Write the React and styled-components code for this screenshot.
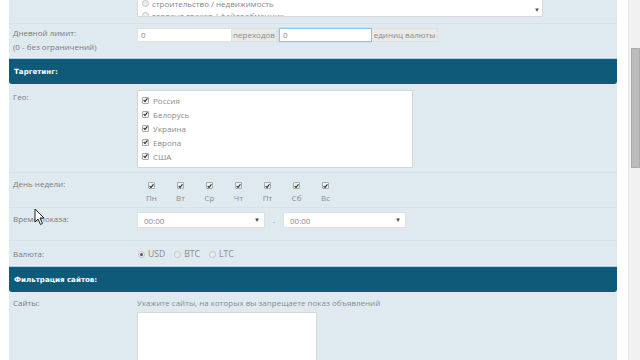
import React from "react";
import styled, { createGlobalStyle } from "styled-components";

const Global = createGlobalStyle`
  html, body { margin: 0; padding: 0; background: #fff; }
  body { width: 640px; height: 360px; overflow: hidden; font-family: "Open Sans", "Liberation Sans", sans-serif; }
  * { box-sizing: border-box; }
`;

const Page = styled.div`
  display: flex;
  width: 640px;
  height: 360px;
  overflow: hidden;
  position: relative;
`;

const Main = styled.div`
  flex: 1;
  padding: 0 11px 0 9px;
`;

const Panel = styled.div`
  background: #dfeaf0;
  margin-top: -15px;
  min-height: 400px;
`;

const Scrollbar = styled.div`
  width: 12px;
  background: #f1f1f1;
  padding-top: 48px;
  padding-left: 2px;
  border-left: 1px solid #e6e6e6;
`;

const Thumb = styled.div`
  width: 9px;
  height: 120px;
  background: #bcbcbc;
  border: 1px solid #ababab;
`;

const Row = styled.div`
  display: grid;
  grid-template-columns: 128px 1fr;
  padding: ${(p) => p.$pad || "0"};
  border-bottom: ${(p) => (p.$noLine ? "none" : "1px solid #d3e1e9")};
`;

const Label = styled.div`
  padding-left: 4px;
  padding-top: ${(p) => p.$top || 0}px;
  color: #7b7b7b;
  font-size: 8px;
  line-height: 14px;
`;

const Content = styled.div`
  padding-top: ${(p) => p.$top || 0}px;
`;

const ListBox = styled.div`
  display: flex;
  width: 406px;
  height: 32px;
  background: #fff;
  border: 1px solid #d9d9d9;
  border-top: none;
  overflow: hidden;
`;

const ListItems = styled.div`
  flex: 1;
  padding: 12px 0 0 4px;
`;

const ListItem = styled.div`
  display: flex;
  align-items: center;
  gap: 3px;
  height: 12px;
  color: #8a8a8a;
  font-size: 8px;
  white-space: nowrap;
`;

const ListArrow = styled.div`
  width: 10px;
  display: flex;
  align-items: flex-end;
  justify-content: center;
  padding-bottom: 3px;
  color: #555;
  font-size: 6px;
  line-height: 6px;
`;

const InputGroup = styled.div`
  display: flex;
  align-items: stretch;
  height: 14px;
`;

const TextInput = styled.div`
  width: ${(p) => p.$w}px;
  background: #fff;
  border: 1px solid ${(p) => (p.$focus ? "#8fc3e6" : "#e2e2e2")};
  box-shadow: ${(p) => (p.$focus ? "0 0 2px #a8d3f0" : "none")};
  color: #888;
  font-size: 8px;
  line-height: 12px;
  padding-left: 3px;
  margin-left: ${(p) => p.$ml || 0}px;
`;

const Addon = styled.div`
  width: ${(p) => p.$w}px;
  background: #e9e9e9;
  border: 1px solid #e0e0e0;
  border-left: none;
  color: #8a8a8a;
  font-size: 8px;
  line-height: 12px;
  text-align: center;
`;

const Header = styled.div`
  background: #0f5a78;
  border-top: 1px solid #a6d6ea;
  border-radius: 0 0 3px 3px;
  height: 26px;
  padding-left: 5px;
  display: flex;
  align-items: center;
  color: #fff;
  font-family: "DejaVu Sans", Verdana, sans-serif;
  font-weight: bold;
  font-size: 7.1px;
`;

const GeoBox = styled.div`
  width: 276px;
  height: 78px;
  background: #fff;
  border: 1px solid #d4d4d4;
  padding: 2px 0 0 4px;
`;

const GeoItem = styled.div`
  display: flex;
  align-items: center;
  gap: 4px;
  height: 14px;
  color: #8a8a8a;
  font-size: 8px;
`;

const CheckBox = styled.span`
  display: inline-flex;
  align-items: center;
  justify-content: center;
  width: 7px;
  height: 7px;
  border: 1px solid #a9a9a9;
  border-radius: 1px;
  background: #f2f2f2;
  flex: none;
`;

const Radio = styled.span`
  display: inline-flex;
  align-items: center;
  justify-content: center;
  width: 7px;
  height: 7px;
  border-radius: 50%;
  border: 1px solid #c4c4c4;
  background: #ececec;
  flex: none;
  &::after {
    content: "";
    display: ${(p) => (p.$on ? "block" : "none")};
    width: 3px;
    height: 3px;
    border-radius: 50%;
    background: #555;
  }
`;

const Days = styled.div`
  display: flex;
`;

const Day = styled.div`
  width: 29px;
  display: flex;
  flex-direction: column;
  align-items: center;
`;

const DayName = styled.div`
  margin-top: 3px;
  color: #8a8a8a;
  font-size: 8px;
  line-height: 12px;
`;

const Selects = styled.div`
  display: flex;
  align-items: center;
`;

const Select = styled.div`
  width: ${(p) => p.$w}px;
  height: 16px;
  background: #fff;
  border: 1px solid #e1e1e1;
  display: flex;
  align-items: center;
  justify-content: space-between;
  padding: 0 4px 0 6px;
  color: #888;
  font-size: 8px;
`;

const Caret = styled.span`
  color: #444;
  font-size: 6px;
`;

const Dash = styled.span`
  width: 18px;
  text-align: center;
  color: #999;
  font-size: 8px;
`;

const Radios = styled.div`
  display: flex;
  align-items: center;
  gap: 3px;
  color: #8a8a8a;
  font-size: 8.6px;
  line-height: 12px;
  padding-left: 1px;
`;

const RadioLabel = styled.span`
  margin-right: 6px;
`;

const Hint = styled.div`
  color: #8a8a8a;
  font-size: 8px;
  line-height: 14px;
`;

const TextArea = styled.div`
  width: 180px;
  height: 80px;
  margin-top: 2px;
  background: #fff;
  border: 1px solid #d8d8d8;
`;

const Cursor = styled.svg`
  position: absolute;
  left: 34px;
  top: 208px;
`;

const Tick = () => (
  <svg width="6" height="6" viewBox="0 0 6 6">
    <path d="M0.8 3.2 L2.4 4.8 L5.3 1" stroke="#222" strokeWidth="1.3" fill="none" />
  </svg>
);

const Check = () => (
  <CheckBox>
    <Tick />
  </CheckBox>
);

const geo = ["Россия", "Белорусь", "Украина", "Европа", "США"];
const days = ["Пн", "Вт", "Ср", "Чт", "Пт", "Сб", "Вс"];

export default function App() {
  return (
    <>
      <Global />
      <Page>
        <Main>
          <Panel>
            <Row $pad="0 0 6px 0">
              <Label />
              <Content>
                <ListBox>
                  <ListItems>
                    <ListItem><Radio />строительство / недвижимость</ListItem>
                    <ListItem><Radio />торрент-трекер / файлообменник</ListItem>
                  </ListItems>
                  <ListArrow>▼</ListArrow>
                </ListBox>
              </Content>
            </Row>
            <Row $pad="2px 0 4px 0" $noLine>
              <Label>
                Дневной лимит:
                <br />
                (0 - без ограничений)
              </Label>
              <Content $top={2}>
                <InputGroup>
                  <TextInput $w={95}>0</TextInput>
                  <Addon $w={45}>переходов</Addon>
                  <TextInput $w={93} $ml={2} $focus>0</TextInput>
                  <Addon $w={66}>единиц валюты</Addon>
                </InputGroup>
              </Content>
            </Row>
            <Header>Таргетинг:</Header>
            <Row $pad="6px 0 4px 0">
              <Label $top={-1}>Гео:</Label>
              <Content>
                <GeoBox>
                  {geo.map((g) => (
                    <GeoItem key={g}>
                      <Check />
                      {g}
                    </GeoItem>
                  ))}
                </GeoBox>
              </Content>
            </Row>
            <Row $pad="0 0 3px 0">
              <Label $top={4}>День недели:</Label>
              <Content $top={9}>
                <Days>
                  {days.map((d) => (
                    <Day key={d}>
                      <Check />
                      <DayName>{d}</DayName>
                    </Day>
                  ))}
                </Days>
              </Content>
            </Row>
            <Row $pad="4px 0 12px 0">
              <Label $top={-1}>Время показа:</Label>
              <Content>
                <Selects>
                  <Select $w={128}>
                    00:00<Caret>▼</Caret>
                  </Select>
                  <Dash>-</Dash>
                  <Select $w={123}>
                    00:00<Caret>▼</Caret>
                  </Select>
                </Selects>
              </Content>
            </Row>
            <Row $pad="6px 0 5px 0" $noLine>
              <Label>Валюта:</Label>
              <Content $top={1}>
                <Radios>
                  <Radio $on />
                  <RadioLabel>USD</RadioLabel>
                  <Radio />
                  <RadioLabel>BTC</RadioLabel>
                  <Radio />
                  <RadioLabel>LTC</RadioLabel>
                </Radios>
              </Content>
            </Row>
            <Header>Фильтрация сайтов:</Header>
            <Row $pad="4px 0 0 0" $noLine>
              <Label>Сайты:</Label>
              <Content>
                <Hint>Укажите сайты, на которых вы запрещаете показ объявлений</Hint>
                <TextArea />
              </Content>
            </Row>
          </Panel>
        </Main>
        <Scrollbar>
          <Thumb />
        </Scrollbar>
        <Cursor width="12" height="18" viewBox="0 0 12 18">
          <path d="M1 1 L1 14 L4 11 L6.5 16.5 L8.5 15.5 L6 10 L10 10 Z" fill="#fff" stroke="#222" strokeWidth="1" strokeLinejoin="round" />
        </Cursor>
      </Page>
    </>
  );
}
